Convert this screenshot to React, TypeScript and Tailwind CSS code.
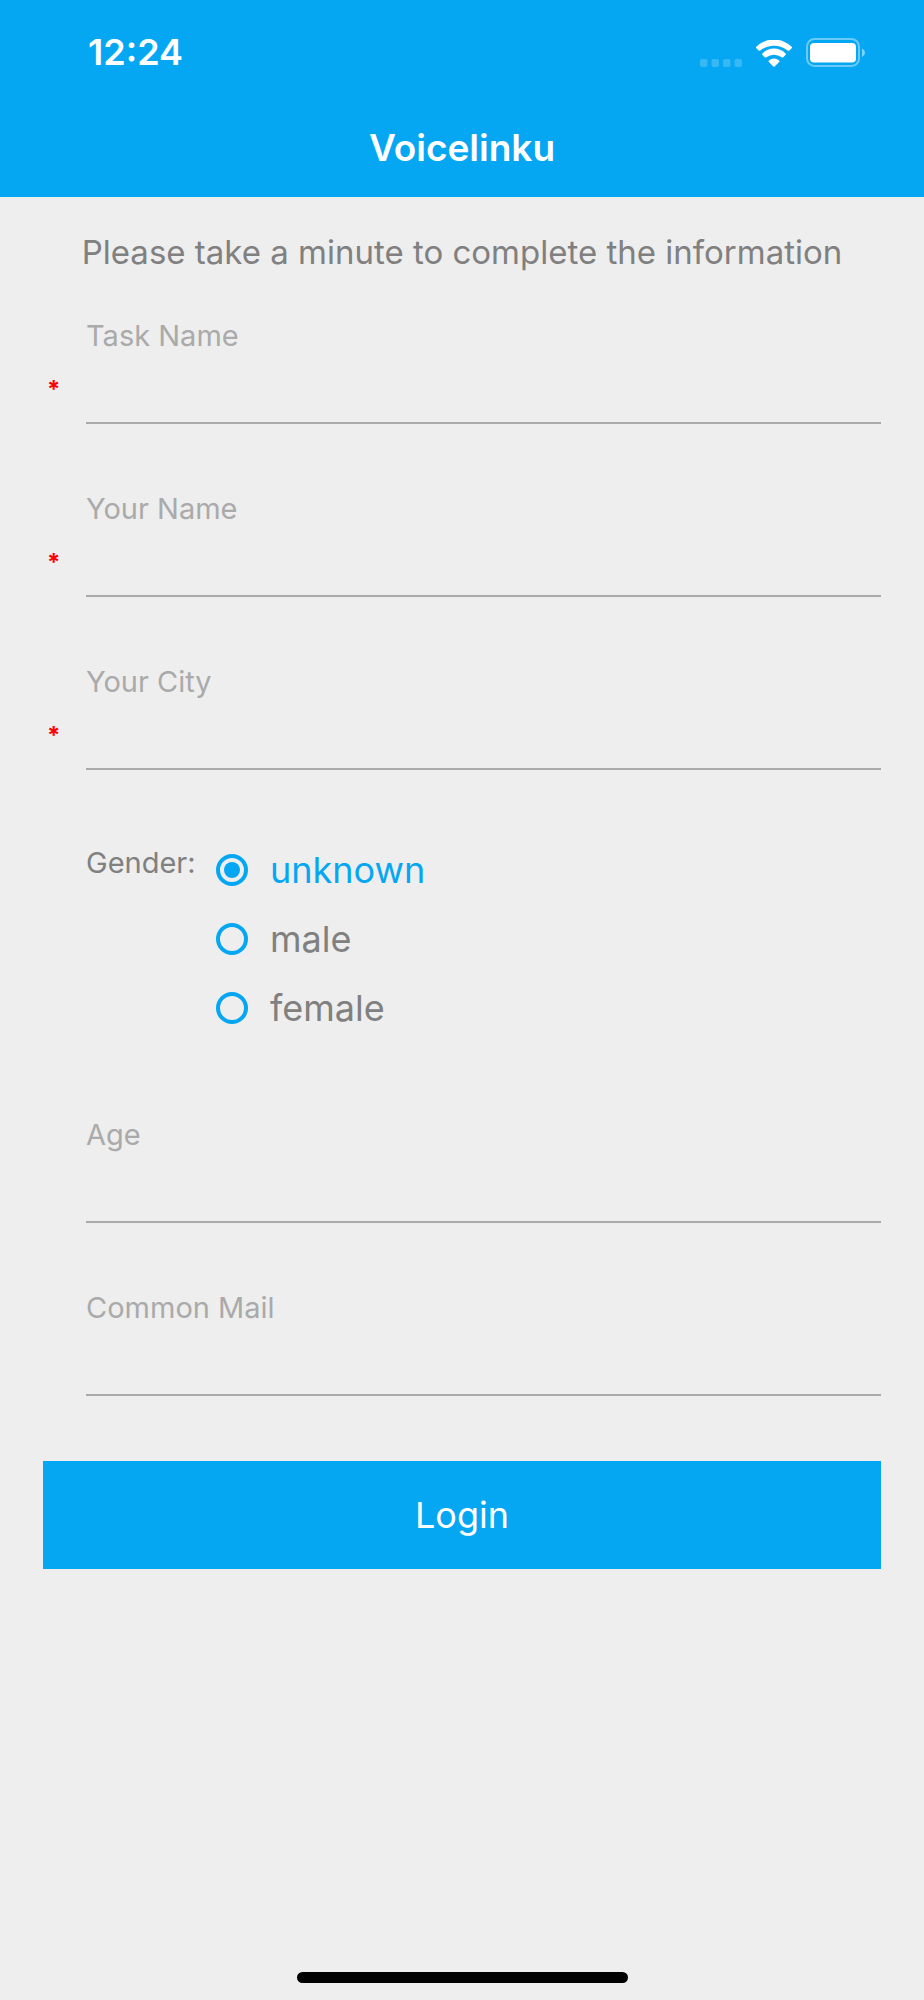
import { useState } from 'react'

interface TextFieldProps {
  id: string
  label: string
  type?: string
  required?: boolean
}

const GENDERS = ['unknown', 'male', 'female']

function StatusIcons() {
  return (
    <div className="flex items-end gap-3.5" aria-hidden="true">
      <svg className="h-2 w-[42px] fill-white/20" viewBox="0 0 42 8">
        <rect x="0" width="7.5" height="8" rx="2" />
        <rect x="11.5" width="7.5" height="8" rx="2" />
        <rect x="23" width="7.5" height="8" rx="2" />
        <rect x="34.5" width="7.5" height="8" rx="2" />
      </svg>
      <svg className="h-[27px] w-9 fill-white" viewBox="0 0 108 80">
        <path d="M1 20A75 75 0 0 1 107 20Q109 22 107 24L100 31Q98 33 95 31A65 65 0 0 0 13 31Q10 33 8 31L1 24Q-1 22 1 20Z" />
        <path d="M20 39A48.5 48.5 0 0 1 88 39Q91 42 89 44L82 51Q80 53 77 51A39 39 0 0 0 31 51Q28 53 26 51L19 44Q17 42 20 39Z" />
        <path d="M39 61A22 22 0 0 1 69 61Q72 63 70 65L56 79Q54 81 52 79L38 65Q36 63 39 61Z" />
      </svg>
      <svg className="h-[29px] w-[60px]" viewBox="0 0 60 29">
        <rect x="1" y="1" width="52" height="27" rx="7.5" fill="none" stroke="#fff" strokeOpacity="0.4" strokeWidth="2" />
        <rect x="4" y="5" width="46" height="19.5" rx="4" fill="#fff" />
        <path d="M56 10.5Q59 12 59 14.8Q59 17.5 56 19Z" fill="#fff" fillOpacity="0.5" />
      </svg>
    </div>
  )
}

function TextField({ id, label, type = 'text', required = false }: TextFieldProps) {
  return (
    <div className="flex">
      <span className="w-[43px] shrink-0 pt-[58px] pl-1 text-2xl font-bold text-[#ff0000]" aria-hidden="true">
        {required && '*'}
      </span>
      <div className="flex min-w-0 flex-1 flex-col">
        <label htmlFor={id} className="text-[29px] leading-10 text-[#aaaaaa]">
          {label}
        </label>
        <input
          id={id}
          name={id}
          type={type}
          required={required}
          className="h-[68px] w-full border-b-2 border-[#aaaaaa] bg-transparent text-[29px] text-[#808080] outline-none"
        />
      </div>
    </div>
  )
}

export default function App() {
  const [gender, setGender] = useState('unknown')

  return (
    <div className="flex min-h-screen flex-col bg-[#eeeeee] font-['Inter',sans-serif]">
      <header className="bg-[#05a7f2] text-white">
        <div className="flex h-[104px] items-center justify-between pr-[58px] pl-[88px]">
          <span className="text-4xl font-semibold">12:24</span>
          <StatusIcons />
        </div>
        <h1 className="h-[93px] text-center text-[37px] leading-[88px] font-semibold">Voicelinku</h1>
      </header>

      <main className="px-[43px] pt-[35px]">
        <p className="text-center text-[33px] leading-10 text-[#808080]">
          Please take a minute to complete the information
        </p>

        <form className="mt-11 flex flex-col gap-[65px]" onSubmit={(e) => e.preventDefault()}>
          <TextField id="task" label="Task Name" required />
          <TextField id="name" label="Your Name" required />
          <TextField id="city" label="Your City" required />

          <div role="radiogroup" aria-labelledby="gender-label" className="flex pb-2 pl-[43px]">
            <span id="gender-label" className="w-[130px] pt-2 text-[29px] leading-10 text-[#808080]">
              Gender:
            </span>
            <div>
              {GENDERS.map((item) => (
                <label
                  key={item}
                  className="flex h-[69px] items-center gap-[22px] text-4xl text-[#808080] has-checked:text-[#05a7f2]"
                >
                  <input
                    type="radio"
                    name="gender"
                    value={item}
                    checked={gender === item}
                    onChange={() => setGender(item)}
                    className="grid size-8 appearance-none place-items-center rounded-full border-4 border-[#05a7f2] before:size-4 before:rounded-full checked:before:bg-[#05a7f2]"
                  />
                  {item}
                </label>
              ))}
            </div>
          </div>

          <TextField id="age" label="Age" />
          <TextField id="mail" label="Common Mail" type="email" />

          <button type="submit" className="h-[108px] bg-[#05a7f2] text-4xl text-white">
            Login
          </button>
        </form>
      </main>

      <div className="mx-auto mt-auto mb-[17px] h-[11px] w-[331px] rounded-full bg-black" />
    </div>
  )
}
